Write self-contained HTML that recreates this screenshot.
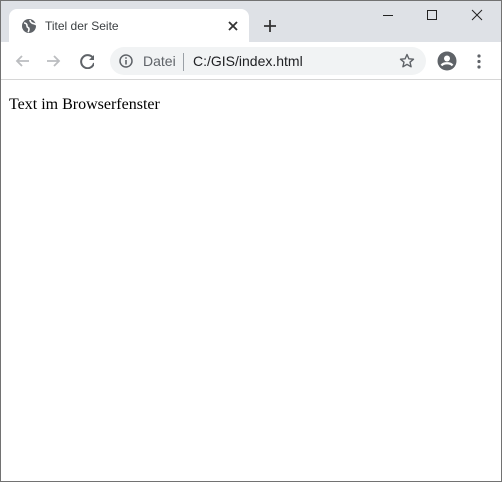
<!DOCTYPE html>
<html><head><style>
body{margin:0;width:502px;height:482px;overflow:hidden;background:#fff;position:relative;font-family:"Liberation Sans",sans-serif}
.frame{position:absolute;left:0;top:0;width:500px;height:480px;border:1px solid #727272;z-index:5}
.strip{position:absolute;left:1px;top:1px;width:500px;height:41px;background:#dee1e6}
.tab{position:absolute;left:9px;top:9px;width:240px;height:33px;background:#fff;border-radius:8px 8px 0 0}
.tb{position:absolute;left:1px;top:42px;width:500px;height:37px;background:#fff;border-bottom:1px solid #d6d6d6}
.omni{position:absolute;left:110px;top:47px;width:316px;height:28px;background:#f1f3f4;border-radius:14px}
.t{position:absolute;white-space:nowrap}
</style></head><body>
<div class="frame"></div>
<div class="strip"></div>
<div class="tab"></div>
<svg class="t" style="left:21px;top:18px" width="16" height="16" viewBox="0 0 16 16"><circle cx="8" cy="8" r="7" fill="#5f6368"/><path d="M3 5c2 0 3 1 3 3s2 1 2 3-1 3-1 3M9 2c0 2 1 2 2 3s3 0 4 2" stroke="#fff" stroke-width="1.6" fill="none"/></svg>
<div class="t" style="left:45px;top:19px;font-size:12px;color:#3c4043">Titel der Seite</div>
<svg class="t" style="left:228px;top:21px" width="10" height="10"><path d="M1 1L9 9M9 1L1 9" stroke="#333" stroke-width="1.8"/></svg>
<svg class="t" style="left:263px;top:19px" width="14" height="14"><path d="M7 1V13M1 7H13" stroke="#333" stroke-width="1.8"/></svg>
<svg class="t" style="left:383px;top:9px" width="110" height="14"><path d="M0 6.5H10" stroke="#222" stroke-width="1"/><rect x="44.5" y="1.5" width="9" height="9" stroke="#222" fill="none"/><path d="M89 1L99 11M99 1L89 11" stroke="#222"/></svg>
<div class="tb"></div>
<svg class="t" style="left:14px;top:53px" width="80" height="16" viewBox="0 0 80 16"><path d="M15 8H3M8 3L3 8l5 5" stroke="#bbbdc0" stroke-width="1.8" fill="none"/><path d="M33 8H45M40 3l5 5-5 5" stroke="#bbbdc0" stroke-width="1.8" fill="none"/><path d="M79 5A6.5 6.5 0 1 0 80 10" stroke="#5f6368" stroke-width="2" fill="none"/><path d="M80 2V7H75Z" fill="#5f6368"/></svg>
<div class="omni"></div>
<svg class="t" style="left:119px;top:54px" width="14" height="14"><circle cx="7" cy="7" r="6" stroke="#5f6368" stroke-width="1.5" fill="none"/><path d="M7 6V10.5" stroke="#5f6368" stroke-width="1.6"/><circle cx="7" cy="4" r="0.9" fill="#5f6368"/></svg>
<div class="t" style="left:143px;top:53px;font-size:14px;color:#5f6368">Datei</div>
<div class="t" style="left:183px;top:53px;width:1px;height:18px;background:#9aa0a6"></div>
<div class="t" style="left:193px;top:53px;font-size:14px;color:#202124">C:/GIS/index.html</div>
<svg class="t" style="left:399px;top:53px" width="16" height="16" viewBox="0 0 16 16"><path d="M8 1.5l1.9 4.3 4.6.4-3.5 3 1.1 4.6L8 11.4 3.9 13.8 5 9.2 1.5 6.2l4.6-.4z" stroke="#5f6368" stroke-width="1.4" fill="none" stroke-linejoin="round"/></svg>
<svg class="t" style="left:437px;top:51px" width="20" height="20" viewBox="0 0 20 20"><circle cx="10" cy="10" r="9.5" fill="#5f6368"/><circle cx="10" cy="7.5" r="3" fill="#fff"/><path d="M4.5 14.5c2-3 9-3 11 0" stroke="#fff" stroke-width="2.2" fill="none"/></svg>
<svg class="t" style="left:476px;top:54px" width="6" height="16"><circle cx="3" cy="2" r="1.6" fill="#5f6368"/><circle cx="3" cy="7.5" r="1.6" fill="#5f6368"/><circle cx="3" cy="13" r="1.6" fill="#5f6368"/></svg>
<div class="t" style="left:9px;top:96px;font-family:'Liberation Serif',serif;font-size:16px;color:#000">Text im Browserfenster</div>
</body></html>
